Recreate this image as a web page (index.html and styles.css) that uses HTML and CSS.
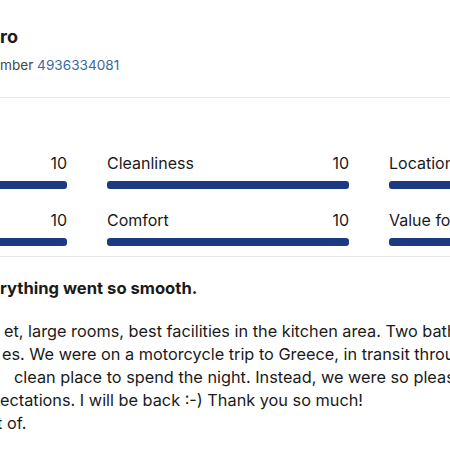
FILE: index.html
```html
<!DOCTYPE html>
<html>

<head>
  <meta name="viewport" content="width=device-width, initial-scale=1">
  <link rel="stylesheet" href="styles.css">
</head>

<body>
  <div class="review">

    <!-- guest and booking -->
    <div class="guest">
      <div class="guest-name">ro</div>
      <div class="booking">mber <a href="#">4936334081</a></div>
    </div>

    <!-- category scores -->
    <div class="scores">
      <div class="score">
        <div class="score-head"><span>Staff</span><span>10</span></div>
        <div class="bar"></div>
      </div>
      <div class="score">
        <div class="score-head"><span>Cleanliness</span><span>10</span></div>
        <div class="bar"></div>
      </div>
      <div class="score">
        <div class="score-head"><span>Location</span><span>10</span></div>
        <div class="bar"></div>
      </div>
      <div class="score">
        <div class="score-head"><span>Facilities</span><span>10</span></div>
        <div class="bar"></div>
      </div>
      <div class="score">
        <div class="score-head"><span>Comfort</span><span>10</span></div>
        <div class="bar"></div>
      </div>
      <div class="score">
        <div class="score-head"><span>Value for money</span><span>10</span></div>
        <div class="bar"></div>
      </div>
    </div>

    <!-- review text -->
    <div class="comment">
      <h3 class="comment-title">rything went so smooth.</h3>
      <div class="comment-body">
        <div class="line l1">et, large rooms, best facilities in the kitchen area. Two bathrooms</div>
        <div class="line l2">es. We were on a motorcycle trip to Greece, in transit through</div>
        <div class="line l3">clean place to spend the night. Instead, we were so pleased</div>
        <div class="line">ectations. I will be back :-) Thank you so much!</div>
        <div class="line l5">t of.</div>
      </div>
    </div>

  </div>
</body>

</html>
```

FILE: styles.css
```css
* {
  box-sizing: border-box;
}

body {
  margin: 0;
  overflow: hidden;
  background: #fff;
  font-family: Inter, "Noto Sans", sans-serif;
  color: #1a1a1a;
}

.review {
  width: 450px;
  overflow: hidden;
}

/* Guest name and booking number */
.guest {
  padding: 25px 0 22px 0;
  border-bottom: 1px solid #e7e7e7;
}

.guest-name {
  font-size: 18px;
  font-weight: 700;
  line-height: 24px;
}

.booking {
  margin-top: 6px;
  font-size: 13.6px;
  line-height: 20px;
  color: #474747;
}

.booking a {
  color: #3a6a9e;
  text-decoration: none;
}

/* Category scores, the grid starts left of the picture */
.scores {
  display: grid;
  grid-template-columns: repeat(3, 242px);
  column-gap: 40px;
  row-gap: 20px;
  margin-left: -175px;
  width: 900px;
  padding: 54px 0 10px 0;
  border-bottom: 1px solid #e7e7e7;
}

.score-head {
  display: flex;
  justify-content: space-between;
  font-size: 16px;
  line-height: 22px;
  margin-bottom: 7px;
}

.bar {
  height: 8px;
  border-radius: 3px;
  background: #1b3a82;
}

/* Review text */
.comment {
  padding-top: 20px;
}

.comment-title {
  margin: 0 0 21px 0;
  font-size: 16.6px;
  font-weight: 700;
  line-height: 22px;
}

.comment-body {
  font-size: 16.3px;
  line-height: 23px;
}

.line {
  white-space: nowrap;
}

.l1 {
  padding-left: 4px;
}

.l2 {
  padding-left: 2px;
}

.l3 {
  padding-left: 14px;
}

.l5 {
  margin-left: -3px;
}
```
